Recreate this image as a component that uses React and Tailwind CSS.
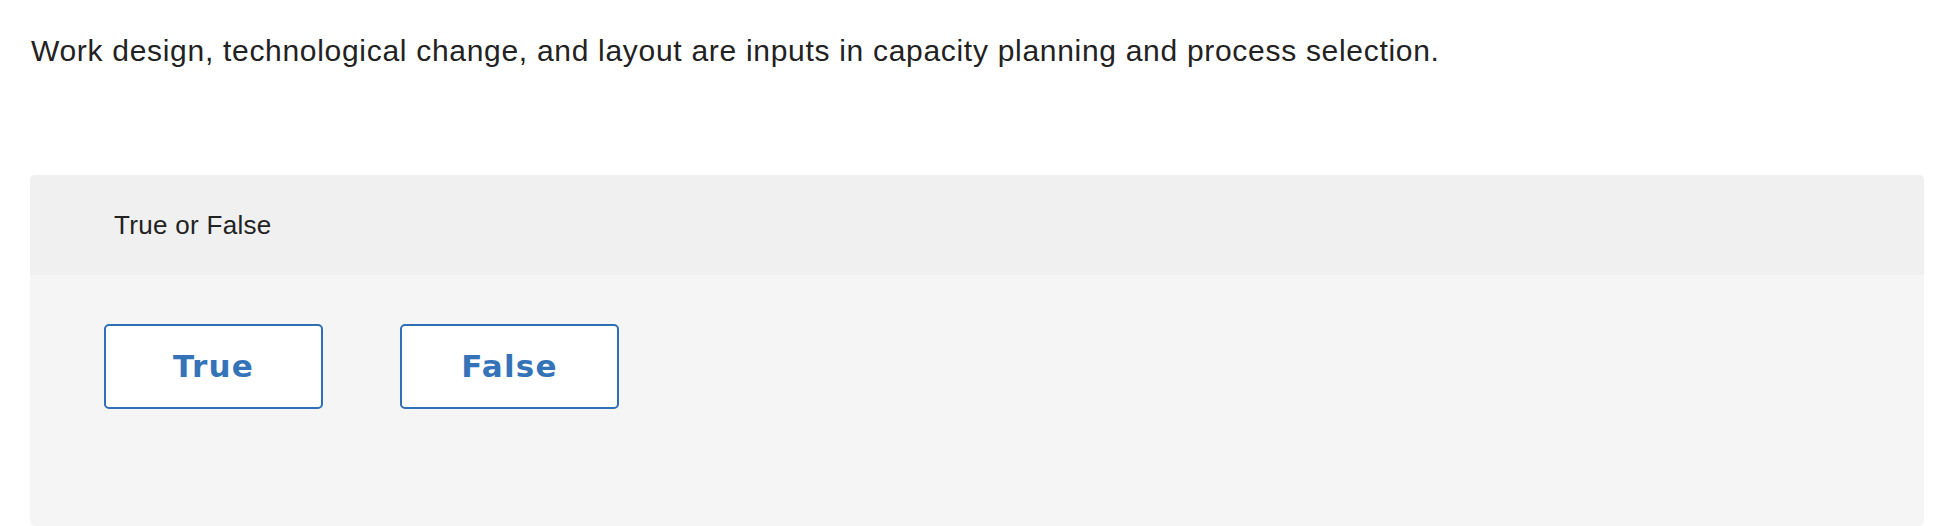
import React from "react";

const choices = ["True", "False"];

const App = () => {
  return (
    <div className="w-[1948px] h-[526px] bg-white overflow-hidden font-['Liberation_Sans',Arial,sans-serif] text-[#222222]">
      <p className="pl-[31px] pt-[33px] text-[30px] leading-[36px] tracking-[0.7px]">
        Work design, technological change, and layout are inputs in capacity
        planning and process selection.
      </p>
      <div className="ml-[30px] mr-[24px] mt-[106px] h-[351px] rounded-[5px] overflow-hidden bg-[#f5f5f5] flex flex-col">
        <div className="h-[100px] bg-[#f0f0f0] flex items-center pl-[84px] text-[26px] tracking-[0.3px]">
          True or False
        </div>
        <div className="flex gap-[77px] pl-[74px] pt-[49px]">
          {choices.map((c) => (
            <button
              key={c}
              className="w-[219px] h-[85px] bg-white border-2 border-[#2f6fb6] rounded-[5px] flex items-center justify-center text-[#3473b8] font-bold text-[31px] tracking-[1.2px] font-['DejaVu_Sans',sans-serif]"
            >
              {c}
            </button>
          ))}
        </div>
      </div>
    </div>
  );
};

export default App;
